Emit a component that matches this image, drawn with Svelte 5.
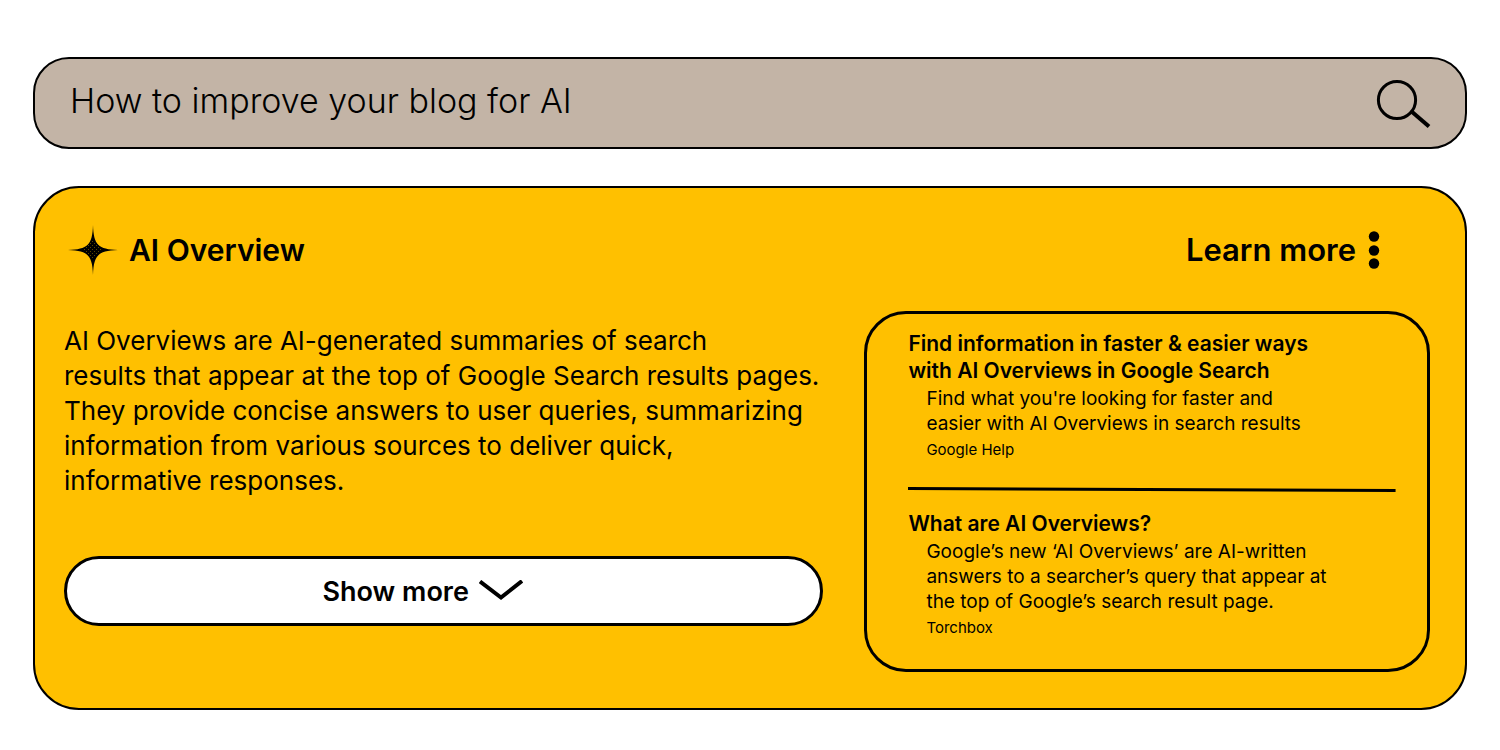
<script>
  let query = $state("How to improve your blog for AI");

  const summary = [
    "AI Overviews are AI-generated summaries of search",
    "results that appear at the top of Google Search results pages.",
    "They provide concise answers to user queries, summarizing",
    "information from various sources to deliver quick,",
    "informative responses.",
  ];

  const sources = [
    {
      title: ["Find information in faster & easier ways", "with AI Overviews in Google Search"],
      text: ["Find what you're looking for faster and", "easier with AI Overviews in search results"],
      site: "Google Help",
    },
    {
      title: ["What are AI Overviews?"],
      text: [
        "Google’s new ‘AI Overviews’ are AI-written",
        "answers to a searcher’s query that appear at",
        "the top of Google’s search result page.",
      ],
      site: "Torchbox",
    },
  ];
</script>

{#snippet lines(list)}
  {#each list as line, i}{#if i > 0}<br />{/if}{line}{/each}
{/snippet}

<main>
  <form class="search" role="search" onsubmit={(e) => e.preventDefault()}>
    <input type="text" aria-label="Search" bind:value={query} />
    <button type="submit" aria-label="Search">
      <svg width="55" height="50" viewBox="0 0 55 50">
        <circle cx="21" cy="22" r="18.6" />
        <path d="M35 33 53 48.500" />
      </svg>
    </button>
  </form>

  <section class="overview">
    <header>
      <h1>
        <svg width="50" height="50" viewBox="0 0 50 50" aria-hidden="true">
          <defs>
            <pattern id="dots" width="4" height="4" patternUnits="userSpaceOnUse">
              <rect width="4" height="4" fill="#000" />
              <rect width="1" height="1" fill="#5c4600" />
              <rect x="2" y="2" width="1" height="1" fill="#5c4600" />
            </pattern>
          </defs>
          <path d="M25 0C25.600 19.800 30.200 24.400 50 25 30.200 25.600 25.600 30.200 25 50 24.400 30.200 19.800 25.600 0 25 19.800 24.400 24.400 19.800 25 0Z" />
          <path class="core" d="M25 15 35 25 25 35 15 25Z" />
        </svg>
        AI Overview
      </h1>
      <div class="actions">
        <a href="#learn">Learn more</a>
        <button type="button" aria-label="More options">
          <svg width="12" height="38" viewBox="0 0 12 38">
            <circle cx="6" cy="5.500" r="5.200" />
            <circle cx="6" cy="19.500" r="5.200" />
            <circle cx="6" cy="32.500" r="5.200" />
          </svg>
        </button>
      </div>
    </header>

    <div class="columns">
      <div class="answer">
        <p>{@render lines(summary)}</p>
        <button type="button" class="show-more">
          Show more
          <svg width="44" height="22" viewBox="0 0 44 22" aria-hidden="true">
            <path d="M1 1.500 22 17.500 43 1" />
          </svg>
        </button>
      </div>

      <aside>
        {#each sources as source, i}
          {#if i > 0}
            <svg class="rule" viewBox="0 0 488 5" preserveAspectRatio="none" aria-hidden="true">
              <path d="M0 1.500 488 3.500" />
            </svg>
          {/if}
          <article>
            <h2>{@render lines(source.title)}</h2>
            <p>{@render lines(source.text)}</p>
            <small>{source.site}</small>
          </article>
        {/each}
      </aside>
    </div>
  </section>
</main>

<style>
  :global(body) {
    margin: 0;
    background: #fff;
  }

  main {
    display: flex;
    flex-direction: column;
    gap: 37px;
    padding: 57px 33px 40px;
    color: #000;
    font-family: Inter, "Liberation Sans", sans-serif;
  }

  h1, h2, p {
    margin: 0;
  }

  button {
    padding: 0;
    border: 0;
    background: none;
    color: inherit;
    font: inherit;
    cursor: pointer;
  }

  svg {
    display: block;
  }

  .search {
    display: flex;
    align-items: center;
    box-sizing: border-box;
    height: 92px;
    padding: 0 34px 0 35px;
    border: 2px solid #000;
    border-radius: 36px;
    background: #c3b4a6;
  }

  .search input {
    flex: 1;
    min-width: 0;
    padding: 0 0 6px;
    border: 0;
    outline: 0;
    background: none;
    color: inherit;
    font: 350 34px Inter, "Liberation Sans", sans-serif;
  }

  .search svg {
    fill: none;
    stroke: #000;
    stroke-width: 3;
  }

  .search path {
    stroke-width: 4;
  }

  .overview {
    padding: 36px 35px 36px 29px;
    border: 2px solid #000;
    border-radius: 46px;
    background: #ffc000;
  }

  header {
    display: flex;
    align-items: center;
    justify-content: space-between;
    padding: 0 50px 0 4px;
    margin-bottom: 35px;
  }

  h1,
  .actions {
    display: flex;
    align-items: center;
    gap: 12px;
    font-size: 31px;
    font-weight: 600;
    line-height: 52px;
  }

  h1 {
    gap: 11px;
    font-size: 30px;
  }

  .core {
    fill: url(#dots);
  }

  .actions a {
    color: inherit;
    text-decoration: none;
  }

  .columns {
    display: grid;
    grid-template-columns: 769fr 566fr;
    gap: 32px;
  }

  .answer {
    padding-top: 12px;
    font-size: 26px;
    line-height: 35px;
    white-space: nowrap;
  }

  .show-more {
    display: flex;
    align-items: center;
    justify-content: center;
    gap: 10px;
    box-sizing: border-box;
    width: calc(100% - 9px);
    height: 70px;
    margin-top: 58px;
    padding-right: 42px;
    border: 3px solid #000;
    border-radius: 35px;
    background: #fff;
    font-size: 27px;
    font-weight: 600;
  }

  .show-more path {
    fill: none;
    stroke: #000;
    stroke-width: 4;
  }

  aside {
    padding: 16px 31px 28px 41px;
    border: 3px solid #000;
    border-radius: 42px;
    white-space: nowrap;
  }

  .rule {
    width: 100%;
    height: 5px;
    margin: 24px 0 18px;
    stroke: #000;
    stroke-width: 3;
  }

  h2 {
    font-size: 21px;
    font-weight: 600;
    line-height: 27px;
  }

  article p {
    padding: 2px 0 0 18px;
    font-size: 19px;
    line-height: 25px;
  }

  small {
    display: block;
    padding-left: 18px;
    font-size: 15px;
    line-height: 27px;
  }
</style>
